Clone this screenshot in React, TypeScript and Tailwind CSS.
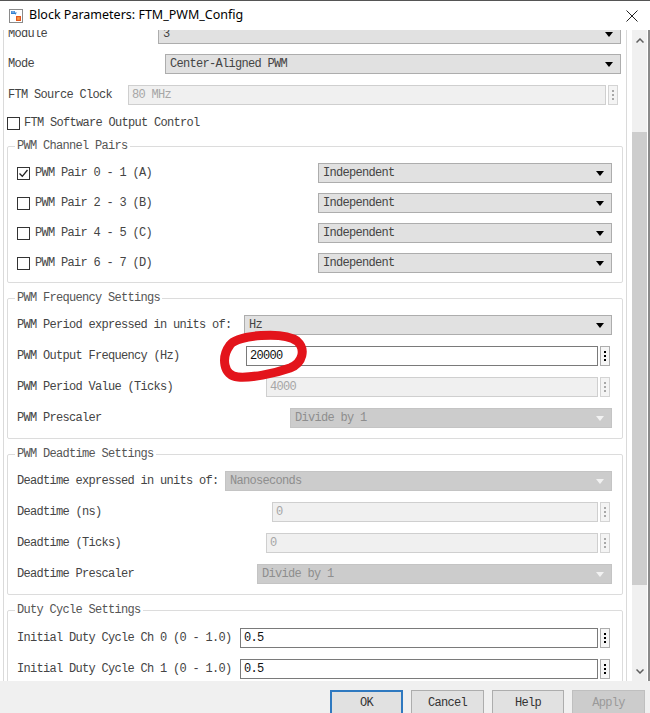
import clsx from "clsx";

const mono = "font-['Liberation_Mono',monospace] text-[12px] tracking-[-0.7px]";

const Caret = ({ disabled }: { disabled?: boolean }) => (
    <svg width="8" height="5" viewBox="0 0 8 5" className="shrink-0">
        <path d="M0 0 H8 L4 5 Z" fill={disabled ? "#f2f2f2" : "#000"} />
    </svg>
);

const Select = ({ value, disabled, className }: { value: string; disabled?: boolean; className?: string }) => (
    <div
        className={clsx(
            "h-[20px] flex-1 flex items-center justify-between pl-[4px] pr-[7px] border",
            disabled ? "bg-[#cccccc] border-[#c4c4c4] text-[#8e8e8e]" : "bg-[#e1e1e1] border-[#adadad] text-[#444]",
            className
        )}
    >
        <span>{value}</span>
        <Caret disabled={disabled} />
    </div>
);

const Dots = ({ disabled }: { disabled?: boolean }) => (
    <div
        className={clsx(
            "w-[10px] h-[20px] ml-[2px] border flex flex-col items-center justify-center gap-[2px]",
            disabled ? "border-[#d4d4d4] bg-[#f4f4f4]" : "border-[#adadad] bg-[#f6f6f6]"
        )}
    >
        {[0, 1, 2].map((i) => (
            <div key={i} className={clsx("w-[2px] h-[2px]", disabled ? "bg-[#a8a8a8]" : "bg-[#000]")} />
        ))}
    </div>
);

const Edit = ({ value, disabled, className }: { value: string; disabled?: boolean; className?: string }) => (
    <div className={clsx("flex-1 flex items-center", className)}>
        <div
            className={clsx(
                "h-[20px] flex-1 flex items-center pl-[3px] border",
                disabled ? "bg-[#f0f0f0] border-[#cfcfcf] text-[#a6a6a6]" : "bg-white border-[#7a7a7a] text-[#111]"
            )}
        >
            {value}
        </div>
        <Dots disabled={disabled} />
    </div>
);

const CheckBox = ({ checked }: { checked?: boolean }) => (
    <div className="w-[13px] h-[13px] border border-[#333] bg-white shrink-0 flex items-center justify-center">
        {checked && (
            <svg width="11" height="11" viewBox="0 0 11 11">
                <path d="M1.5 5.5 L4.3 8.3 L9.5 2" fill="none" stroke="#222" strokeWidth="1.3" />
            </svg>
        )}
    </div>
);

const Group = ({ title, className, children }: { title: string; className?: string; children: React.ReactNode }) => (
    <fieldset className={clsx("border border-[#dcdcdc] rounded-[2px] pl-[9px] pr-[10px]", className)}>
        <legend className="px-[2px] -ml-[2px] leading-[16px] text-[#555]">{title}</legend>
        {children}
    </fieldset>
);

const pairs = ["PWM Pair 0 - 1 (A)", "PWM Pair 2 - 3 (B)", "PWM Pair 4 - 5 (C)", "PWM Pair 6 - 7 (D)"];

export default function App() {
    return (
        <div className={clsx("w-[650px] h-[713px] bg-white flex flex-col overflow-hidden border-t border-[#555]", mono)}>
            {/* title bar */}
            <div className="h-[29px] shrink-0 flex items-center pl-[9px] pr-[12px] bg-white">
                <svg width="14" height="14" viewBox="0 0 14 14" className="shrink-0">
                    <rect x="0.5" y="0.5" width="13" height="13" fill="#fff" stroke="#8a8a8a" />
                    <path d="M2 2 H6 V3.5 H8 L6 6 V5 H2 Z" fill="#2f7fd0" />
                    <path d="M2.5 3 H5.5" stroke="#fff" strokeWidth="0.6" />
                    <rect x="7" y="7" width="5" height="5" fill="#e2571e" />
                    <rect x="8.2" y="8.2" width="2.6" height="2.6" fill="#f7a14a" />
                </svg>
                <span className="ml-[6px] font-['Noto_Sans',sans-serif] text-[12.5px] tracking-[0px] text-black">
                    Block Parameters: FTM_PWM_Config
                </span>
                <svg width="12" height="12" viewBox="0 0 12 12" className="ml-auto">
                    <path d="M0.5 0.5 L11.5 11.5 M11.5 0.5 L0.5 11.5" stroke="#222" strokeWidth="1" />
                </svg>
            </div>

            {/* body */}
            <div className="h-[651px] shrink-0 flex">
                <div className="w-[3px] bg-white" />
                <div className="w-[624px] border-l border-r border-[#dadada] overflow-hidden relative">
                    <div className="-mt-[6px] px-[3px] text-[#444]">
                        <div className="flex items-center h-[20px] pl-[1px] pr-[2px]">
                            <span className="w-[150px] shrink-0">Module</span>
                            <Select value="3" />
                        </div>
                        <div className="flex items-center h-[20px] mt-[10px] pl-[1px] pr-[2px]">
                            <span className="w-[157px] shrink-0">Mode</span>
                            <Select value="Center-Aligned PWM" />
                        </div>
                        <div className="flex items-center h-[20px] mt-[11px] pl-[1px] pr-[2px]">
                            <span className="w-[120px] shrink-0">FTM Source Clock</span>
                            <Edit value="80 MHz" disabled className="mr-[3px]" />
                        </div>
                        <div className="flex items-center h-[20px] mt-[8px] gap-[4px]">
                            <CheckBox />
                            <span>FTM Software Output Control</span>
                        </div>

                        <Group title="PWM Channel Pairs" className="mt-[5px] pt-[9px] pb-[9px]">
                            <div className="flex flex-col gap-[10px]">
                                {pairs.map((p, i) => (
                                    <div key={p} className="flex items-center h-[20px]">
                                        <div className="w-[301px] shrink-0 flex items-center gap-[5px]">
                                            <CheckBox checked={i === 0} />
                                            <span>{p}</span>
                                        </div>
                                        <Select value="Independent" />
                                    </div>
                                ))}
                            </div>
                        </Group>

                        <Group title="PWM Frequency Settings" className="mt-[7px] pt-[9px] pb-[10px]">
                            <div className="flex flex-col gap-[11px]">
                                <div className="flex items-center h-[20px]">
                                    <span className="w-[227px] shrink-0">PWM Period expressed in units of:</span>
                                    <Select value="Hz" />
                                </div>
                                <div className="flex items-center h-[20px]">
                                    <span className="w-[229px] shrink-0">PWM Output Frequency (Hz)</span>
                                    <Edit value="20000" className="mr-[2px]" />
                                </div>
                                <div className="flex items-center h-[20px]">
                                    <span className="w-[249px] shrink-0">PWM Period Value (Ticks)</span>
                                    <Edit value="4000" disabled className="mr-[2px]" />
                                </div>
                                <div className="flex items-center h-[20px]">
                                    <span className="w-[273px] shrink-0">PWM Prescaler</span>
                                    <Select value="Divide by 1" disabled />
                                </div>
                            </div>
                        </Group>

                        <Group title="PWM Deadtime Settings" className="mt-[7px] pt-[9px] pb-[10px]">
                            <div className="flex flex-col gap-[11px]">
                                <div className="flex items-center h-[20px]">
                                    <span className="w-[208px] shrink-0">Deadtime expressed in units of:</span>
                                    <Select value="Nanoseconds" disabled />
                                </div>
                                <div className="flex items-center h-[20px]">
                                    <span className="w-[255px] shrink-0">Deadtime (ns)</span>
                                    <Edit value="0" disabled className="mr-[2px]" />
                                </div>
                                <div className="flex items-center h-[20px]">
                                    <span className="w-[249px] shrink-0">Deadtime (Ticks)</span>
                                    <Edit value="0" disabled className="mr-[2px]" />
                                </div>
                                <div className="flex items-center h-[20px]">
                                    <span className="w-[240px] shrink-0">Deadtime Prescaler</span>
                                    <Select value="Divide by 1" disabled />
                                </div>
                            </div>
                        </Group>

                        <Group title="Duty Cycle Settings" className="mt-[7px] pt-[10px] pb-[10px]">
                            <div className="flex flex-col gap-[11px]">
                                <div className="flex items-center h-[20px]">
                                    <span className="w-[223px] shrink-0">Initial Duty Cycle Ch 0 (0 - 1.0)</span>
                                    <Edit value="0.5" className="mr-[2px]" />
                                </div>
                                <div className="flex items-center h-[20px]">
                                    <span className="w-[223px] shrink-0">Initial Duty Cycle Ch 1 (0 - 1.0)</span>
                                    <Edit value="0.5" className="mr-[2px]" />
                                </div>
                            </div>
                        </Group>
                    </div>

                    {/* red hand-drawn annotation */}
                    <svg className="absolute left-0 top-0 pointer-events-none" width="624" height="650" viewBox="3 30 624 650">
                        <path
                            d="M229 345 C236 335, 282 331, 296 341 C305 349, 302 363, 289 368 C272 374, 250 378, 237 377 C222 376, 220 357, 229 345 Z"
                            fill="none"
                            stroke="#e3141b"
                            strokeWidth="9"
                            strokeLinejoin="round"
                        />
                    </svg>
                </div>
                <div className="w-[5px] bg-white" />
                {/* scrollbar */}
                <div className="w-[15px] bg-[#f0f0f0] flex flex-col">
                    <div className="h-[20px] flex items-center justify-center">
                        <svg width="8" height="5" viewBox="0 0 8 5">
                            <path d="M0.5 4.5 L4 1 L7.5 4.5" fill="none" stroke="#606060" strokeWidth="1.5" />
                        </svg>
                    </div>
                    <div className="h-[82px]" />
                    <div className="h-[453px] bg-[#cdcdcd]" />
                    <div className="flex-1" />
                    <div className="h-[20px] flex items-center justify-center">
                        <svg width="8" height="5" viewBox="0 0 8 5">
                            <path d="M0.5 0.5 L4 4 L7.5 0.5" fill="none" stroke="#606060" strokeWidth="1.5" />
                        </svg>
                    </div>
                </div>
                <div className="w-[1px] bg-white" />
                <div className="w-[2px] bg-[#8a8a8a]" />
            </div>

            {/* button bar */}
            <div className="flex-1 bg-[#f0f0f0] flex justify-end items-start gap-[8px] pt-[9px] pr-[5px]">
                <button className="w-[73px] h-[26px] bg-[#e1e1e1] border-2 border-[#2f79c0] text-[#333]">OK</button>
                <button className="w-[73px] h-[26px] bg-[#e1e1e1] border border-[#adadad] text-[#333]">Cancel</button>
                <button className="w-[72px] h-[26px] bg-[#e1e1e1] border border-[#adadad] text-[#333]">Help</button>
                <button className="w-[73px] h-[26px] bg-[#cccccc] border border-[#bfbfbf] text-[#9a9a9a]">Apply</button>
            </div>
        </div>
    );
}
